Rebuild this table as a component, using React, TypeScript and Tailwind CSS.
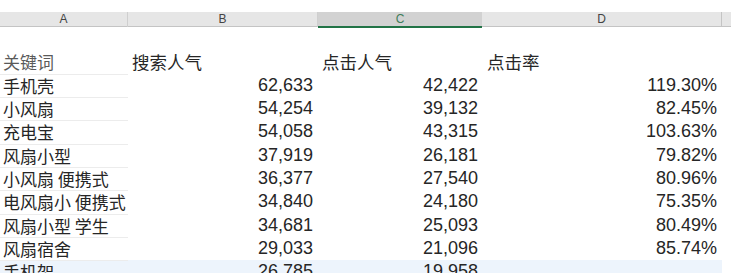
const cjk = "font-['Noto_Sans_CJK_SC',sans-serif]";
const num = "font-['Liberation_Sans',Arial,sans-serif]";

const rows = [
  ["手机壳", "62,633", "42,422", "119.30%"],
  ["小风扇", "54,254", "39,132", "82.45%"],
  ["充电宝", "54,058", "43,315", "103.63%"],
  ["风扇小型", "37,919", "26,181", "79.82%"],
  ["小风扇 便携式", "36,377", "27,540", "80.96%"],
  ["电风扇小 便携式", "34,840", "24,180", "75.35%"],
  ["风扇小型 学生", "34,681", "25,093", "80.49%"],
  ["风扇宿舍", "29,033", "21,096", "85.74%"],
];

const cols = "grid grid-cols-[128px_190px_164px_240px]";

function ColHeader() {
  return (
    <div className={`${cols} h-[15px] mt-[12px] bg-[#e6e6e6] border-b border-[#c4c4c4] text-[12px] leading-[14px] text-[#444] ${num}`}>
      <div className="flex justify-center border-r border-[#cfcfcf]">A</div>
      <div className="flex justify-center border-r border-[#cfcfcf]">B</div>
      <div className="flex justify-center bg-[#d2d2d2] border-b-2 border-[#217346] text-[#3f7d5a] -mb-px">C</div>
      <div className="flex justify-center border-r border-[#c4c4c4]">D</div>
    </div>
  );
}

export default function App() {
  return (
    <div className="w-[731px] h-[273px] overflow-hidden bg-white text-[#262626]">
      <ColHeader />
      <div className="w-[722px]">
        <div className="h-[23.33px]" />
        <div className={`${cols} h-[23.33px] text-[17.5px] leading-[23.33px] ${cjk}`}>
          <div className="pl-[3px] text-[17px] text-[#5a5a5a] border-b border-[#ececec]">关键词</div>
          <div className="pl-[4px]">搜索人气</div>
          <div className="pl-[4px]">点击人气</div>
          <div className="pl-[5px]">点击率</div>
        </div>
        {rows.map((r) => (
          <div key={r[0]} className={`${cols} h-[23.33px] text-[18px] leading-[23.33px]`}>
            <div className={`pl-[3px] text-[17px] whitespace-nowrap border-b border-[#ececec] ${cjk}`}>{r[0]}</div>
            <div className={`pr-[5px] text-right ${num}`}>{r[1]}</div>
            <div className={`pr-[4px] text-right ${num}`}>{r[2]}</div>
            <div className={`pr-[5px] text-right ${num}`}>{r[3]}</div>
          </div>
        ))}
        <div className={`${cols} h-[23.33px] text-[18px] leading-[23.33px] bg-[#edf4fc]`}>
          <div className={`pl-[3px] text-[17px] ${cjk}`}>手机架</div>
          <div className={`pr-[5px] text-right ${num}`}>26,785</div>
          <div className={`pr-[4px] text-right ${num}`}>19,958</div>
          <div />
        </div>
      </div>
    </div>
  );
}
